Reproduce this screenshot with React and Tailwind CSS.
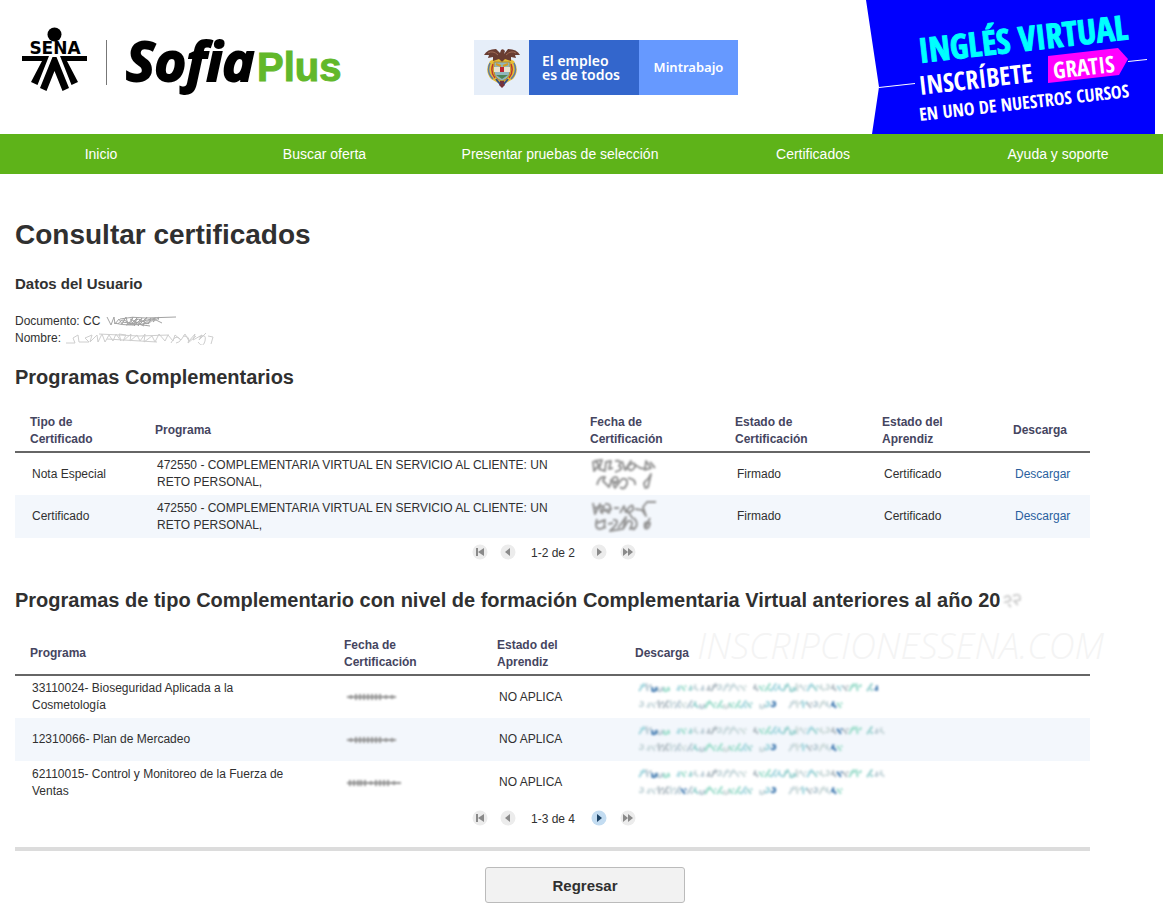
import React from "react";

const squiggles = {
  doc: "M1 2l4 8 3-8 1 7 4-5 3 5 4-7 2 8 5-8-3 8 7-7-3 8 8-8-4 8 9-9-4 8 8-7-3 6 7-6-2 4 6-5-1 3M8 8q16 4 34 0M14 4q12-3 26-1l30-1M20 10l30-7M16 7l28 4M24 4l14 7M12 9q4-6 8-3t7 4q3-8 8-5t6 4q4-6 9-4l6 3",
  name: "M1 10h9l-2-5 5-3 1 7h10l-4-4 7-3-2 7 7-7 1 7 4-8 3 8 4-7 4 6 3-7 5 7-2-7 7 1-3 6 8-7-1 7 7-6 3 6 5-7-1 8 8-6 3 6 4-8 6 7 3-6 5 6 2-6 6 5 4-6 4 7 6-7-2 6 9-5-3 5 8-8",
  nameFrame: "M34 1l40 2 30-1M42 6l50 3M106 10q4-8 8-5t-3 5M118 3q8 0 5 7l8-7M134 4q8-4 6 4t-7 1M143 3l5 1-2 7",
  dateA: "M3 3l1 10 5-6-4-4 7-1-3 9 6 2 1-9 5-1-2 8 4-1M25 3q8-1 4 5q6 3-4 6M32 3l3 9 6-9-5 9M38 8q7-6 7 1q-4 6-7 1M44 6l6 4 5 1 1-8 5 7-7 2M60 4l5 6M7 27q2-9 8-8l-2 4 6 6 4-9q5-3 5 3q-7 1-3 7l7-9q6-1 5 5-3 7-7 3M20 22l8 4M38 20q8 1 7 7M55 28q-3-3 3-7l3-5-3 13q-4 2-3-1",
  dateB: "M3 2l2 11 5-10 1 9M4 7l10-2-2 8M15 3q8-1 4 9l-5-3 8-1M24 7h5M30 12l4-7 2 7M37 9q7-9 6 0-6 5-6 0l6 9M45 8l7 1 4 6-3-9 4-5 9 0M7 18q-3 10 3 10l6-2M7 22l8-3-1 8M18 23l5-1M23 19q7-1 2 6l-5 5 12-2M28 27l8-11-3 12 5-8q7-1 2 8l4-1M44 17q6 7-1 12M55 27q-2-8 5-5-1 7-5 5l5-10",
};

function Squiggle({ d, width, height, ink, weight = 1, soft = false, className = "" }) {
  return (
    <svg
      aria-hidden="true"
      width={width}
      height={height}
      viewBox={`0 0 ${width} ${height}`}
      className={`inline-block shrink-0 ${soft ? "blur-[1px]" : ""} ${className}`}
    >
      <path d={d} fill="none" stroke={ink} strokeWidth={weight} strokeLinejoin="round" />
    </svg>
  );
}

function DateSmudge({ long }) {
  const strokes = long
    ? "M3 6h54M6 3v6M10 3v6M14 3v6M17 3v6M21 3v6M27 4v4M32 3v6M36 3v6M40 3v6M44 3v6M50 4v4"
    : "M3 6h49M7 4v4M12 3v6M16 3v6M20 3v6M24 3v6M28 3v6M32 3v6M36 3v6M42 4v4M48 4v4";
  return <Squiggle d={strokes} width={62} height={12} ink="#949494" weight={2} soft className="-ml-0.5 block" />;
}

const glyphs = [
  "M0 7l4-6M3 5l1 2",
  "M0 4h2l2 2M2 1l-1 3",
  "M0 5q4 2 3-3M1 2l2 1",
  "M0 2l3 4M4 2l-1 1",
  "M0 7l4-6M1 3h4",
  "M1 3v3q3 1 3-3M4 3l1 3",
  "M1 1l1 6M3 4l2-2",
  "M1 5h3M3 2v4",
];
const linkInks = ["#a3dfcf", "#bccdd6", "#9fd3d2", "#cbdade", "#b4bfc6", "#a8d8e0", "#cfdcdc"];

function noise(i) {
  return ((i * 7919 + 104729) ^ (i * i * 31 + 17)) % 997;
}

function LinkSmudge({ row }) {
  const lines = [
    { y: 2, count: row === 0 ? 40 : 41, gaps: [5, 18, 37], marks: row === 0 ? [2, 39] : [2, 33] },
    { y: 19, count: 34, gaps: [19, 23, 24], marks: row === 2 ? [7, 22, 32] : [22, 32] },
  ];
  return (
    <svg aria-hidden="true" width="256" height="34" viewBox="0 0 256 34" className="block">
      <g className="blur-[1px]">
        {lines.map((line, l) =>
          Array.from({ length: line.count }, (_, i) => {
            if (line.gaps.includes(i)) return null;
            const n = noise(i * 3 + l * 41 + 5);
            const dark = line.marks.includes(i);
            return (
              <path
                key={`${l}-${i}`}
                d={glyphs[n % 8]}
                transform={`translate(${2 + i * 6} ${line.y + (n % 2)}) scale(1.3)`}
                fill="none"
                stroke={dark ? "#4a80b4" : linkInks[n % 7]}
                strokeWidth="1.700"
              />
            );
          })
        )}
      </g>
    </svg>
  );
}

function SofiaLogo() {
  return (
    <svg role="img" aria-label="SENA Sofia Plus" width="324" height="80" viewBox="22 20 324 80" className="shrink-0 overflow-visible">
      <circle cx="54.500" cy="34.500" r="7" fill="#000" />
      <text x="55" y="54" textAnchor="middle" fontSize="17" className="font-['DejaVu_Sans',sans-serif] font-bold">SENA</text>
      <path d="M22 56H49L37.500 85 31 82 42 61H22ZM60 56H87V61H67L78 82 71.500 85Z" fill="#000" />
      <path d="M52.500 57H56.500L69 88 62.500 91 54.500 71 46.500 91 40 88Z" fill="#000" />
      <path d="M106.500 40V85" stroke="#777" />
      <text x="126" y="81" fontSize="54" stroke="#000" strokeWidth="2" className="font-['Open_Sans',sans-serif] font-bold italic">Sofia</text>
      <text x="257" y="81" fontSize="40" fill="#62b82a" stroke="#62b82a" className="font-['Liberation_Sans',sans-serif] font-bold">Plus</text>
    </svg>
  );
}

function CoatOfArms() {
  return (
    <svg role="img" aria-label="Escudo de Colombia" width="38" height="42" viewBox="0 0 38 42">
      <path d="M7 14Q1 24 8 32L15 36 23 36 30 32Q37 24 31 14L27 12H11Z" fill="#e7bd35" />
      <path d="M7 16Q3 25 10 32M31 16Q35 25 28 32" fill="none" stroke="#5b7ba6" strokeWidth="1.500" />
      <path d="M10 17Q7 25 12 31M28 17Q31 25 26 31" fill="none" stroke="#b9362f" strokeWidth="1.500" />
      <path d="M1 8Q4 2 13 2L17 6 18 3Q20 1 22 4L21 7 25 2Q34 2 37 8L32 8 33 11 28 10 28 14 22 12 19 15 16 12 10 14 10 10 5 11 6 8Z" fill="#693d32" />
      <path d="M5 6Q10 3 15 8M33 6Q28 3 23 8" fill="none" stroke="#a06b55" />
      <path d="M11 15H27V25Q26 32 19 34Q12 32 11 25Z" fill="#91b6bd" stroke="#b28a29" />
      <path d="M11 20H27V25H11Z" fill="#e9e3cf" />
      <path d="M13 28H25L19 32Z" fill="#4d8357" />
      <path d="M17 20H21V25H17Z" fill="#bb2332" />
      <path d="M13 17L18 19M25 17L20 19" stroke="#d59b23" strokeWidth="2" />
      <path d="M17 34L16 38 19 41 22 38 21 34Z" fill="#76323a" />
      <path d="M13 32L17 37M25 32L21 37" stroke="#344f87" strokeWidth="2" />
    </svg>
  );
}

function GovernmentBadge() {
  return (
    <div className="flex h-[55px] w-[264px] shrink-0 font-['Noto_Sans',sans-serif] font-semibold text-white">
      <div className="flex w-[55px] items-center justify-center bg-[#e6eef9]"><CoatOfArms /></div>
      <div className="flex w-[110px] items-center bg-[#3366cc] pl-[13px] text-[14px] leading-[14px]">
        <span>El empleo<br />es de todos</span>
      </div>
      <div className="flex flex-1 items-center justify-center bg-[#6699ff] text-[13px]">Mintrabajo</div>
    </div>
  );
}

function CourseBanner() {
  return (
    <a href="#ingles" className="block shrink-0">
      <svg width="289" height="134" viewBox="0 0 289 134" className="block font-['Open_Sans_Condensed','Liberation_Sans',sans-serif]">
        <path d="M0 0H289V134H6L13 87Z" fill="#0000fe" />
        <path d="M13 87.500L49 83.500M262 61.500L281 59.500" stroke="#fff" />
        <path d="M182 56L252 48 262 59 253 75 182 83Z" fill="#ff00fe" />
        <text transform="translate(54 63) rotate(-6.500)" fontSize="34" fill="#00ffff" stroke="#00ffff" className="font-bold">INGLÉS VIRTUAL</text>
        <text transform="translate(54 95) rotate(-6.500)" fontSize="26" fill="#fff" className="font-bold">INSCRÍBETE</text>
        <text transform="translate(188 79) rotate(-6.500)" fontSize="23" fill="#fff" className="font-bold">GRATIS</text>
        <text transform="translate(54 121) rotate(-6.500)" fontSize="18" fill="#fff" className="font-light">EN UNO DE NUESTROS CURSOS</text>
      </svg>
    </a>
  );
}

const menu = ["Inicio", "Buscar oferta", "Presentar pruebas de selección", "Certificados", "Ayuda y soporte"];

const arrows = {
  first: "M4 4H6V12H4ZM12 4V12L6 8Z",
  prev: "M10 4V12L5 8Z",
  next: "M6 4V12L11 8Z",
  last: "M3 4V12L8 8ZM8 4V12L13 8Z",
};

function PagerButton({ kind, label, active = false }) {
  return (
    <button type="button" aria-label={label} className="block size-4">
      <svg width="16" height="16" viewBox="0 0 16 16" aria-hidden="true">
        <circle cx="8" cy="8" r="7.500" fill={active ? "#c3dcf1" : "#ececec"} />
        <path d={arrows[kind]} fill={active ? "#1c4264" : "#8a8a8a"} />
      </svg>
    </button>
  );
}

function Pager({ text, hasNext = false }) {
  return (
    <div className="flex h-[27px] items-center justify-center pl-[3px]">
      <div className="flex gap-3">
        <PagerButton kind="first" label="Primera página" />
        <PagerButton kind="prev" label="Página anterior" />
      </div>
      <span className="mr-4 ml-[15px] pt-1">{text}</span>
      <div className="flex gap-[13px]">
        <PagerButton kind="next" label="Página siguiente" active={hasNext} />
        <PagerButton kind="last" label="Última página" />
      </div>
    </div>
  );
}

function DataTable({ label, columns, rows }) {
  return (
    <table aria-label={label} className="w-full table-fixed border-collapse text-left">
      <colgroup>
        {columns.map((c) => <col key={c.name} className={c.width} />)}
      </colgroup>
      <thead>
        <tr className="h-[39px] border-b-2 border-[#666] text-[#45455f]">
          {columns.map((c) => (
            <th key={c.name} scope="col" className="pr-2 pb-[3px] pl-[15px] align-middle font-bold whitespace-pre-line">{c.name}</th>
          ))}
        </tr>
      </thead>
      <tbody>
        {rows.map((cells, r) => (
          <tr key={r} className="h-[43px] even:bg-[#f3f7fc]">
            {cells.map((cell, c) => <td key={c} className="pr-2 pl-[17px] align-middle">{cell}</td>)}
          </tr>
        ))}
      </tbody>
    </table>
  );
}

const service = "472550 - COMPLEMENTARIA VIRTUAL EN SERVICIO AL CLIENTE: UN RETO PERSONAL,";
const download = <a href="#descargar" className="text-[#2a5f9e]">Descargar</a>;

const complementaryColumns = [
  { name: "Tipo de\nCertificado", width: "w-[125px]" },
  { name: "Programa", width: "w-auto" },
  { name: "Fecha de\nCertificación", width: "w-[145px]" },
  { name: "Estado de\nCertificación", width: "w-[147px]" },
  { name: "Estado del\nAprendiz", width: "w-[131px]" },
  { name: "Descarga", width: "w-[92px]" },
];

const complementaryRows = [
  ["dateA", "Nota Especial"],
  ["dateB", "Certificado"],
].map(([date, kind]) => [
  kind,
  <span className="block max-w-[400px]">{service}</span>,
  <Squiggle d={squiggles[date]} width={70} height={32} ink="#949494" weight={2} soft className="-ml-0.5 block" />,
  "Firmado",
  "Certificado",
  download,
]);

const earlierColumns = [
  { name: "Programa", width: "w-[314px]" },
  { name: "Fecha de\nCertificación", width: "w-[153px]" },
  { name: "Estado del\nAprendiz", width: "w-[138px]" },
  { name: "Descarga", width: "w-auto" },
];

const earlierRows = [
  "33110024- Bioseguridad Aplicada a la Cosmetología",
  "12310066- Plan de Mercadeo",
  "62110015- Control y Monitoreo de la Fuerza de Ventas",
].map((name, i) => [
  <span className="block max-w-[264px]">{name}</span>,
  <DateSmudge long={i === 2} />,
  "NO APLICA",
  <LinkSmudge row={i} />,
]);

export default function App() {
  return (
    <div className="min-h-screen bg-white font-['Liberation_Sans',Arial,sans-serif] text-[12px] leading-[17px] text-[#303030]">
      <header className="flex h-[134px] justify-between pr-2 pl-[22px]">
        <div className="pt-5"><SofiaLogo /></div>
        <div className="pt-10"><GovernmentBadge /></div>
        <CourseBanner />
      </header>

      <nav className="grid h-10 grid-cols-[202fr_245fr_226fr_280fr_210fr] items-center bg-[#5eb319] text-center text-[14px] text-white">
        {menu.map((item) => <a key={item} href="#menu">{item}</a>)}
      </nav>

      <main className="mx-[15px] max-w-[1075px] pt-[45px]">
        <h1 className="text-[28px] leading-8 font-bold">Consultar certificados</h1>
        <h2 className="mt-[25px] text-[15px] leading-4 font-bold">Datos del Usuario</h2>

        <div className="mt-[21px]">
          <p className="flex items-center gap-1.5">
            Documento: CC
            <Squiggle d={squiggles.doc} width={72} height={13} ink="#a3a3a3" />
          </p>
          <p className="flex items-center gap-1">
            Nombre:
            <Squiggle d={squiggles.name + squiggles.nameFrame} width={152} height={12} ink="#cecece" />
          </p>
        </div>

        <section className="mt-[18px]">
          <h2 className="text-[20px] leading-6 font-bold">Programas Complementarios</h2>
          <div className="mt-6">
            <DataTable label="Programas Complementarios" columns={complementaryColumns} rows={complementaryRows} />
          </div>
          <Pager text="1-2 de 2" />
        </section>

        <section className="relative mt-[23px]">
          <h2 className="flex items-center text-[20px] leading-6 font-bold">
            Programas de tipo Complementario con nivel de formación Complementaria Virtual anteriores al año 20
            <Squiggle d="M4 8q5-5 7 2q-6 3-7 2M13 6q8-4 7 4l-6 1 4 4M8 14l3 3" width={24} height={20} ink="#d0d0d0" weight={2} soft />
          </h2>
          <div className="mt-6">
            <DataTable label="Programas anteriores" columns={earlierColumns} rows={earlierRows} />
          </div>
          <span className="pointer-events-none absolute top-10 right-[-14px] font-['Open_Sans',sans-serif] text-[36px] leading-9 font-light text-[#f4f4f4] italic">INSCRIPCIONESSENA.COM</span>
          <Pager text="1-3 de 4" hasNext />
        </section>

        <hr className="mt-4 border-0 border-t-4 border-[#dcdcdc]" />
        <div className="flex justify-center pt-4 pl-[65px] pb-3">
          <button type="button" className="h-9 w-[200px] rounded-[3px] border border-[#bbb] bg-[#f2f2f2] text-[15px] font-bold">Regresar</button>
        </div>
      </main>
    </div>
  );
}
